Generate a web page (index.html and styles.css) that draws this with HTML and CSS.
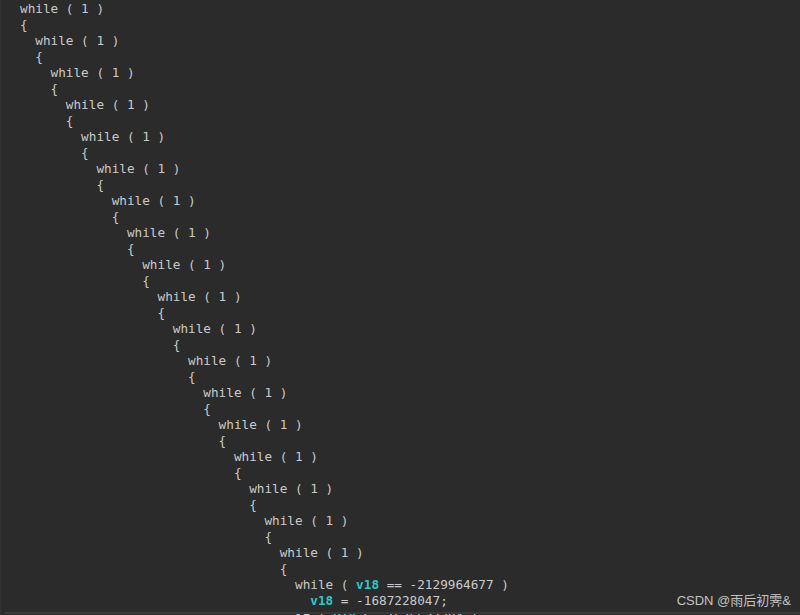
FILE: index.html
```html
<!DOCTYPE html>
<html>
<head>
<meta charset="utf-8">
<link rel="stylesheet" href="styles.css">
</head>
<body>
<div class="editor">
<pre class="code">while ( 1 )
{
  while ( 1 )
  {
    while ( 1 )
    {
      while ( 1 )
      {
        while ( 1 )
        {
          while ( 1 )
          {
            while ( 1 )
            {
              while ( 1 )
              {
                while ( 1 )
                {
                  while ( 1 )
                  {
                    while ( 1 )
                    {
                      while ( 1 )
                      {
                        while ( 1 )
                        {
                          while ( 1 )
                          {
                            while ( 1 )
                            {
                              while ( 1 )
                              {
                                while ( 1 )
                                {
                                  while ( 1 )
                                  {
                                    while ( <span class="var">v18</span> == -2129964677 )
                                      <span class="var">v18</span> = -1687228047;
                                    if ( <span class="var">v18</span> &gt; -1676637284 )</pre>
<div class="hbar"></div>
<div class="watermark">CSDN @雨后初霁&amp;</div>
</div>
</body>
</html>
```
FILE: styles.css
```css
html, body {
  margin: 0;
  padding: 0;
  background: #2b2b2b;
}
.editor {
  position: relative;
  width: 800px;
  height: 615px;
  overflow: hidden;
  background: #2b2b2b;
  border-left: 1px solid #333;
  box-sizing: border-box;
}
.code {
  margin: 0;
  padding: 1px 0 0 19px;
  font-family: "DejaVu Sans Mono", "Liberation Mono", monospace;
  font-size: 12.7px;
  line-height: 16px;
  color: #cacaca;
  white-space: pre;
}
.var {
  color: #2ec8c8;
  font-weight: bold;
}
.hbar {
  position: absolute;
  left: 4px;
  right: 0;
  bottom: 1px;
  height: 2px;
  background: #383838;
}
.watermark {
  position: absolute;
  right: 9px;
  bottom: 6px;
  font-family: "Liberation Sans", "Noto Sans CJK SC", sans-serif;
  font-size: 13px;
  color: #c4c4c4;
}
```
